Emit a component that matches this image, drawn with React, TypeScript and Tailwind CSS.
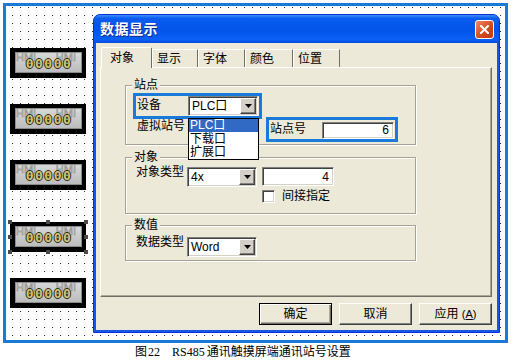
import React from "react";

const ui = "font-['Liberation_Sans','Noto_Sans_CJK_SC',sans-serif] text-[12px] text-black";
const sunken =
  "border border-t-[#808080] border-l-[#808080] border-b-white border-r-white bg-white shadow-[inset_1px_1px_0_#404040,inset_-1px_-1px_0_#d4d0c8]";

function Widget({ selected, className = "" }: { selected?: boolean; className?: string }) {
  return (
    <div className={`relative h-[30px] w-[76px] bg-black pb-[5px] pl-[5px] pr-[4px] pt-[4px] ${className}`}>
      <div className="relative h-full w-full overflow-hidden border border-[#8c8c8c] bg-[linear-gradient(#d8d8d8,#bcbcbc)]">
        <span className="absolute left-0 -top-[1px] font-['Liberation_Sans',sans-serif] text-[11px] leading-none text-[#c8c8c8] [-webkit-text-stroke:0.5px_#8a8a8a]">
          HMI
        </span>
        <span className="absolute -top-[1px] right-[5px] font-['Liberation_Sans',sans-serif] text-[11px] leading-none text-[#c8c8c8] [-webkit-text-stroke:0.5px_#8a8a8a]">
          HMI
        </span>
        <div className="relative flex h-full items-center justify-center pl-[1px] pt-[1px] font-['DejaVu_Sans_Mono',monospace] text-[13px] font-bold leading-none tracking-[1.5px] text-[#cfc67a] [text-shadow:1px_0_0_#2e2c10,-1px_0_0_#2e2c10,0_1px_0_#2e2c10,0_-1px_0_#2e2c10]">
          00000
        </div>
      </div>
      {selected && (
        <>
          <span className="absolute -left-[2px] -top-[2px] h-[4px] w-[4px] bg-[#4a4a4a]" />
          <span className="absolute -top-[2px] left-[36px] h-[4px] w-[4px] bg-[#4a4a4a]" />
          <span className="absolute -right-[2px] -top-[2px] h-[4px] w-[4px] bg-[#4a4a4a]" />
          <span className="absolute -left-[2px] top-[13px] h-[4px] w-[4px] bg-[#4a4a4a]" />
          <span className="absolute -right-[2px] top-[13px] h-[4px] w-[4px] bg-[#4a4a4a]" />
          <span className="absolute -bottom-[2px] -left-[2px] h-[4px] w-[4px] bg-[#4a4a4a]" />
          <span className="absolute -bottom-[2px] left-[36px] h-[4px] w-[4px] bg-[#4a4a4a]" />
          <span className="absolute -bottom-[2px] -right-[2px] h-[4px] w-[4px] bg-[#4a4a4a]" />
        </>
      )}
    </div>
  );
}

function ComboBox({ value, className, children }: { value: string; className: string; children?: React.ReactNode }) {
  return (
    <div className={`relative flex p-[1px] ${sunken} ${className}`}>
      <span className="flex flex-1 items-center pl-[2px] leading-[14px]">{value}</span>
      <span className="flex w-[16px] items-center justify-center border border-b-[#404040] border-l-white border-r-[#404040] border-t-white bg-[#d4d0c8] shadow-[inset_-1px_-1px_0_#808080]">
        <svg width="7" height="4" viewBox="0 0 7 4">
          <path d="M0 0h7L3.5 4z" fill="#000" />
        </svg>
      </span>
      {children}
    </div>
  );
}

function TextBox({ value, className }: { value: string; className: string }) {
  return (
    <div className={`flex items-center justify-end pr-[4px] leading-[14px] ${sunken} ${className}`}>{value}</div>
  );
}

function Group({ title, className, children }: { title: string; className: string; children: React.ReactNode }) {
  return (
    <div
      className={`relative w-[291px] border border-[#a5a294] shadow-[inset_1px_1px_0_#fff,1px_1px_0_#fff] ${className}`}
    >
      <span className="absolute -top-[8px] left-[6px] bg-[#ece9d8] px-[2px] leading-[14px]">{title}</span>
      {children}
    </div>
  );
}

function Button({ label, primary }: { label: React.ReactNode; primary?: boolean }) {
  return (
    <div
      className={`flex h-[22px] w-[73px] items-center justify-center border leading-[14px] ${
        primary
          ? "border-black shadow-[inset_1px_1px_0_#fff,inset_-1px_-1px_0_#716f64,inset_-2px_-2px_0_#aca899]"
          : "border-b-[#404040] border-l-white border-r-[#404040] border-t-white shadow-[inset_-1px_-1px_0_#808080]"
      } bg-[#ece9d8]`}
    >
      {label}
    </div>
  );
}

const tabs = [
  { label: "显示", w: "w-[46px]" },
  { label: "字体", w: "w-[47px]" },
  { label: "颜色", w: "w-[48px]" },
  { label: "位置", w: "w-[47px]" },
];

function Dialog() {
  return (
    <div className={`ml-[7px] mt-[8px] flex h-[319px] w-[407px] flex-col rounded-t-[7px] border border-[#0831d9] bg-[#1656e6] ${ui}`}>
      <div className="flex h-[28px] items-center justify-between rounded-t-[6px] bg-[linear-gradient(to_bottom,#3d8dfa_0%,#0a5cf0_12%,#0254e8_55%,#0a60f5_88%,#0549dd_100%)] pl-[6px] pr-[5px]">
        <span className="text-[14px] font-bold leading-[16px] tracking-[0.5px] text-white [text-shadow:1px_1px_0_#0b2a8c]">
          数据显示
        </span>
        <span className="flex h-[19px] w-[19px] items-center justify-center rounded-[3px] border border-white bg-[linear-gradient(135deg,#f08a62,#d4461c_60%,#c33a12)]">
          <svg width="9" height="9" viewBox="0 0 9 9">
            <path d="M1 1l7 7M8 1L1 8" stroke="#fff" strokeWidth="2" strokeLinecap="square" />
          </svg>
        </span>
      </div>
      <div className="mx-[2px] mb-[2px] flex flex-1 flex-col bg-[#ece9d8]">
        <div className="mt-[4px] flex h-[20px] items-end pl-[5px]">
          <div className="relative z-10 -mb-[1px] h-[21px] w-[51px] rounded-t-[2px] border-l border-r border-t border-l-white border-r-[#716f64] border-t-white bg-[#ece9d8] pl-[8px] pt-[3px] leading-[14px]">
            对象
          </div>
          {tabs.map((t) => (
            <div
              key={t.label}
              className={`h-[18px] ${t.w} border-r border-t border-r-[#716f64] border-t-white pl-[5px] pt-[2px] leading-[14px] shadow-[inset_1px_0_0_#fff]`}
            >
              {t.label}
            </div>
          ))}
        </div>
        <div className="ml-[4px] flex h-[230px] w-[392px] flex-col border border-b-[#716f64] border-l-white border-r-[#716f64] border-t-white pl-[24px] pt-[17px] shadow-[inset_-1px_-1px_0_#aca899]">
          <Group title="站点" className="h-[60px]">
            <div className="flex flex-col pl-[7px] pt-[7px]">
              <div className="flex h-[26px] w-[129px] items-center border-[3px] border-[#1a7ad9]">
                <span className="-mt-[3px] w-[52px] pl-[1px] leading-[14px]">设备</span>
                <ComboBox value="PLC口" className="z-20 h-[20px] w-[70px]">
                  <div className="absolute left-[-1px] top-[21px] w-[71px] border border-black bg-white">
                    <div className="h-[13px] bg-[#316ac5] pl-[1px] leading-[13px] text-white">PLC口</div>
                    <div className="h-[14px] pl-[1px] leading-[14px]">下载口</div>
                    <div className="h-[13px] pl-[1px] leading-[13px]">扩展口</div>
                  </div>
                </ComboBox>
              </div>
              <div className="-mt-[2px] flex items-start">
                <span className="w-[133px] pl-[4px] pt-[2px] leading-[14px]">虚拟站号</span>
                <div className="flex h-[25px] w-[132px] items-center border-[3px] border-[#1a7ad9]">
                  <span className="-mt-[2px] w-[53px] pl-[1px] leading-[14px]">站点号</span>
                  <TextBox value="6" className="mt-[1px] h-[17px] w-[72px]" />
                </div>
              </div>
            </div>
          </Group>
          <Group title="对象" className="mt-[12px] h-[57px]">
            <div className="flex flex-col pl-[10px] pt-[9px]">
              <div className="flex items-start">
                <span className="-mt-[2px] w-[51px] leading-[14px]">对象类型</span>
                <ComboBox value="4x" className="h-[20px] w-[70px]" />
                <TextBox value="4" className="ml-[5px] h-[19px] w-[72px]" />
              </div>
              <div className="mt-[2px] flex items-center pl-[126px]">
                <span className={`h-[13px] w-[13px] ${sunken}`} />
                <span className="ml-[7px] leading-[14px]">间接指定</span>
              </div>
            </div>
          </Group>
          <Group title="数值" className="mt-[11px] h-[36px]">
            <div className="flex items-start pl-[10px] pt-[11px]">
              <span className="-mt-[2px] w-[51px] leading-[14px]">数据类型</span>
              <ComboBox value="Word" className="h-[20px] w-[70px]" />
            </div>
          </Group>
        </div>
        <div className="mt-[6px] flex justify-end gap-[7px] pr-[5px]">
          <Button label="确定" primary />
          <Button label="取消" />
          <Button
            label={
              <span>
                应用 <span className="text-[11px]">(<u>A</u>)</span>
              </span>
            }
          />
        </div>
      </div>
    </div>
  );
}

export default function App() {
  return (
    <div className="h-[361px] w-[514px] bg-white pl-[3px] pt-[3px]">
      <div className="h-[340px] w-[505px] border-[3px] border-[#1a7ad9]">
        <div className="relative flex h-full items-start overflow-hidden">
          <svg className="absolute inset-0" width="100%" height="100%">
            <defs>
              <pattern id="dots" width="8" height="8" patternUnits="userSpaceOnUse">
                <rect x="6" y="1" width="1" height="1" fill="#2a2a2a" />
              </pattern>
            </defs>
            <rect width="100%" height="100%" fill="url(#dots)" />
          </svg>
          <div className="relative flex w-[80px] flex-col pl-[4px] pt-[42px]">
            <Widget />
            <Widget className="mt-[26px]" />
            <Widget className="mt-[26px]" />
            <Widget selected className="mt-[32px]" />
            <Widget className="mt-[26px]" />
          </div>
          <div className="relative">
            <Dialog />
          </div>
        </div>
      </div>
      <div className="mt-[2px] flex items-baseline pl-[132px] font-['Liberation_Serif','Noto_Sans_CJK_SC',serif] text-[12px] leading-[15px] text-black">
        <span>图</span>
        <span className="ml-[1px]">22</span>
        <span className="ml-[12px]">RS485</span>
        <span className="ml-[2px]">通讯触摸屏端通讯站号设置</span>
      </div>
    </div>
  );
}
